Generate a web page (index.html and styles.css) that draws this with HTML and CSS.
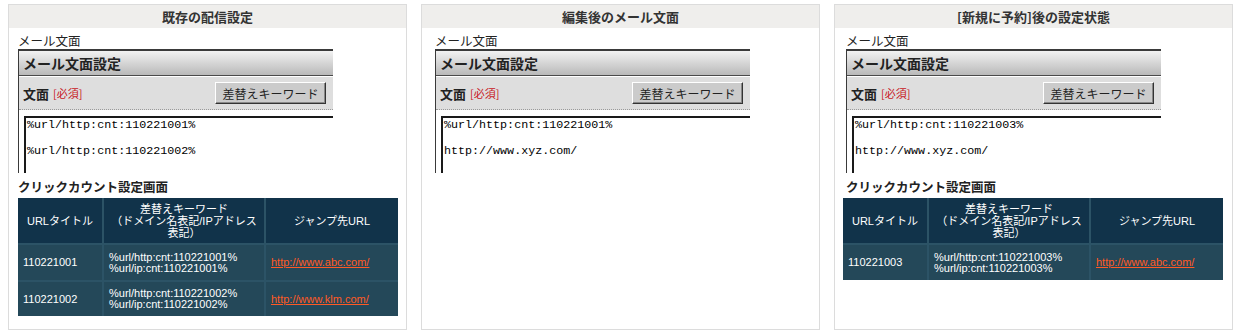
FILE: index.html
```html
<!DOCTYPE html>
<html lang="ja">
<head>
    <meta charset="UTF-8">
    <title>クリックカウント設定</title>
    <link rel="stylesheet" href="styles.css">
</head>
<body>
    <div class="panels">

        <div class="panel panel-a">
            <div class="panel-head">既存の配信設定</div>
            <div class="panel-body">
                <div class="label">メール文面</div>
                <div class="mailbox">
                    <div class="mailbox-head">メール文面設定</div>
                    <div class="mailbox-row">
                        <span class="field-name">文面</span>
                        <span class="required">[必須]</span>
                        <button class="kw-button">差替えキーワード</button>
                    </div>
                    <div class="mailbox-text">%url/http:cnt:110221001%<br><br>%url/http:cnt:110221002%</div>
                </div>
                <div class="label label-bold">クリックカウント設定画面</div>
                <table class="count-table">
                    <thead>
                        <tr>
                            <th class="col-title">URLタイトル</th>
                            <th class="col-key">差替えキーワード<br>（ドメイン名表記/IPアドレス表記）</th>
                            <th>ジャンプ先URL</th>
                        </tr>
                    </thead>
                    <tbody>
                        <tr class="row-first">
                            <td>110221001</td>
                            <td>%url/http:cnt:110221001%<br>%url/ip:cnt:110221001%</td>
                            <td><a href="#">http://www.abc.com/</a></td>
                        </tr>
                        <tr>
                            <td>110221002</td>
                            <td>%url/http:cnt:110221002%<br>%url/ip:cnt:110221002%</td>
                            <td><a href="#">http://www.klm.com/</a></td>
                        </tr>
                    </tbody>
                </table>
            </div>
        </div>

        <div class="panel panel-b">
            <div class="panel-head">編集後のメール文面</div>
            <div class="panel-body">
                <div class="label">メール文面</div>
                <div class="mailbox">
                    <div class="mailbox-head">メール文面設定</div>
                    <div class="mailbox-row">
                        <span class="field-name">文面</span>
                        <span class="required">[必須]</span>
                        <button class="kw-button">差替えキーワード</button>
                    </div>
                    <div class="mailbox-text">%url/http:cnt:110221001%<br><br>http://www.xyz.com/</div>
                </div>
            </div>
        </div>

        <div class="panel panel-c">
            <div class="panel-head">[新規に予約]後の設定状態</div>
            <div class="panel-body">
                <div class="label">メール文面</div>
                <div class="mailbox">
                    <div class="mailbox-head">メール文面設定</div>
                    <div class="mailbox-row">
                        <span class="field-name">文面</span>
                        <span class="required">[必須]</span>
                        <button class="kw-button">差替えキーワード</button>
                    </div>
                    <div class="mailbox-text">%url/http:cnt:110221003%<br><br>http://www.xyz.com/</div>
                </div>
                <div class="label label-bold">クリックカウント設定画面</div>
                <table class="count-table">
                    <thead>
                        <tr>
                            <th class="col-title">URLタイトル</th>
                            <th class="col-key">差替えキーワード<br>（ドメイン名表記/IPアドレス表記）</th>
                            <th>ジャンプ先URL</th>
                        </tr>
                    </thead>
                    <tbody>
                        <tr class="row-first">
                            <td>110221003</td>
                            <td>%url/http:cnt:110221003%<br>%url/ip:cnt:110221003%</td>
                            <td><a href="#">http://www.abc.com/</a></td>
                        </tr>
                    </tbody>
                </table>
            </div>
        </div>

    </div>
</body>
</html>
```

FILE: styles.css
```css
body {
    margin: 0;
    padding: 4px 17px 0 8px;
    background-color: #fff;
    font-family: "Noto Sans CJK JP", "Liberation Sans", sans-serif;
    color: #222;
}

.panels {
    display: flex;
    gap: 14px;
}

.panel {
    flex: 1;
    height: 326px;
    box-sizing: border-box;
    border: 1px solid #dcdcdc;
    overflow: hidden;
}

.panel-head {
    height: 23px;
    line-height: 23px;
    background-color: #efeeec;
    text-align: center;
    font-size: 13px;
    font-weight: bold;
    color: #333;
}

.panel-body {
    padding-top: 4px;
}
.panel-a .panel-body {
    padding-left: 9px;
}
.panel-b .panel-body {
    padding-left: 13px;
}
.panel-c .panel-body {
    padding-left: 11px;
}

.label {
    font-size: 12.5px;
    line-height: 17px;
    height: 17px;
}

.label-bold {
    font-weight: bold;
    margin-top: 5px;
}

/* mail text block, clipped at the right and bottom */
.mailbox {
    width: 315px;
    height: 124px;
    box-sizing: border-box;
    border-top: 2px solid #3a3a3a;
    border-left: 1px solid #3a3a3a;
    overflow: hidden;
}

.mailbox-head {
    height: 24px;
    line-height: 24px;
    padding-left: 4px;
    background: linear-gradient(#f2f2f2, #b9b9b9);
    border-bottom: 1px solid #4a4a4a;
    font-size: 14px;
    font-weight: bold;
    color: #222;
}

.mailbox-row {
    display: flex;
    align-items: center;
    height: 32px;
    margin-top: 1px;
    padding: 0 7px 0 4px;
    background-color: #dedede;
    border-bottom: 1px dotted #9a9a9a;
}

.field-name {
    font-size: 13px;
    font-weight: bold;
}

.required {
    margin-left: 4px;
    font-size: 11px;
    color: #c8161d;
}

.kw-button {
    margin-left: auto;
    width: 111px;
    height: 22px;
    padding: 0;
    background-color: #cbcbcb;
    border: 1px solid;
    border-color: #fff #333 #333 #fff;
    box-shadow: inset -1px -1px 0 #888;
    font-family: "Noto Sans CJK JP", sans-serif;
    font-size: 12px;
    color: #222;
}

.mailbox-text {
    margin: 6px 0 0 5px;
    height: 80px;
    padding: 1px 0 0 1px;
    border-top: 2px solid #1a1a1a;
    border-left: 2px solid #1a1a1a;
    font-family: "Liberation Mono", monospace;
    font-size: 11.7px;
    line-height: 13px;
    color: #000;
    white-space: nowrap;
}

.count-table {
    width: 380px;
    margin-top: 3px;
    border-collapse: collapse;
    border: hidden;
    font-family: "Liberation Sans", "Noto Sans CJK JP", sans-serif;
    font-size: 11px;
    color: #fff;
}
.panel-c .count-table {
    margin-left: -3px;
}

.count-table th {
    height: 42px;
    padding: 2px 4px 1px;
    background-color: #11334a;
    border: 2px solid #2c5366;
    font-weight: normal;
    line-height: 12px;
    text-align: center;
}

.count-table td {
    height: 34px;
    padding: 0 5px;
    background-color: #244859;
    border: 2px solid #2c5366;
    line-height: 11px;
    text-align: left;
}
.count-table .row-first td {
    height: 35px;
}

.col-title {
    width: 76px;
}
.col-key {
    width: 152px;
}

.count-table a {
    color: #ff5a24;
}
```
